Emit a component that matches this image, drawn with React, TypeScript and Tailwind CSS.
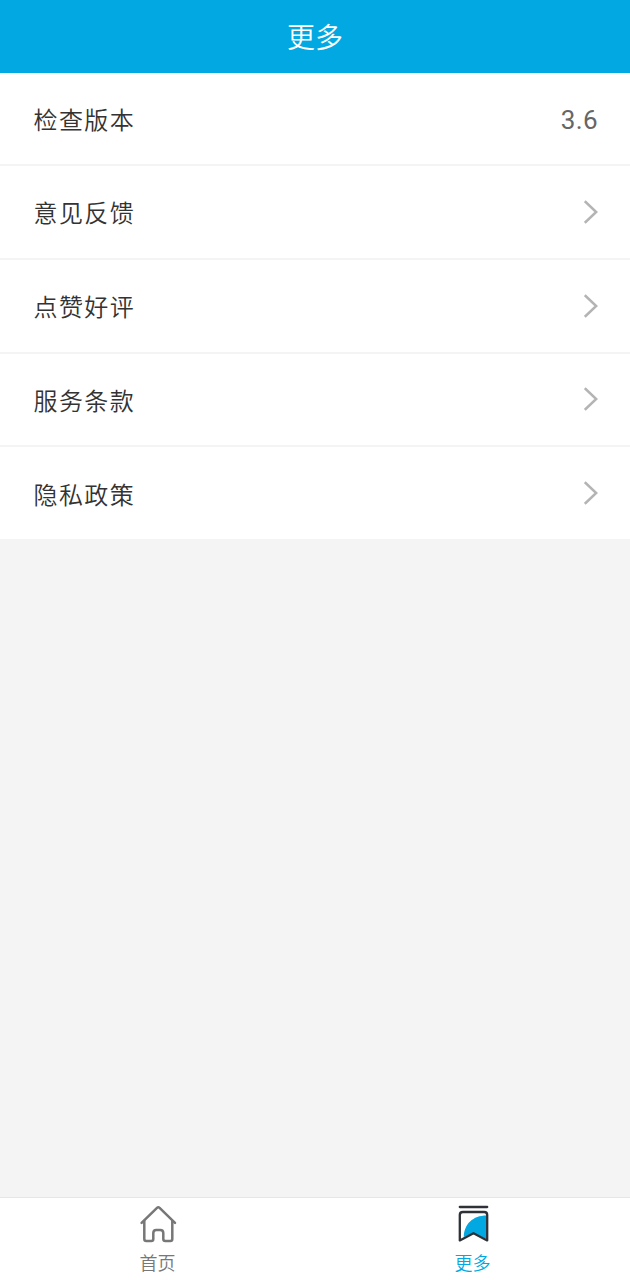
import React from "react";

interface MenuRowProps {
  title: string;
  value?: string;
}

const ChevronIcon: React.FC = () => {
  return (
    <svg className="h-6 w-[14px]" viewBox="0 0 14 24" fill="none">
      <path d="M0.8 1.2 12.2 12 0.8 22.8" stroke="#b4b4b4" strokeWidth="2.5" />
    </svg>
  );
};

const HomeIcon: React.FC = () => {
  return (
    <svg
      className="h-10 w-10"
      viewBox="0 0 40 40"
      fill="none"
      stroke="#777777"
      strokeWidth="2.5"
      strokeLinecap="round"
      strokeLinejoin="round"
    >
      <path d="M3.6 18.8 19 3.8Q20.3 2.6 21.6 3.8L37 18.8" />
      <path d="M6.3 17V35Q6.3 37 8.3 37H13.3Q15.3 37 15.3 35V29Q15.3 26 18.3 26H22.3Q25.3 26 25.3 29V35Q25.3 37 27.3 37H32.3Q34.3 37 34.3 35V17" />
    </svg>
  );
};

const MoreIcon: React.FC = () => {
  return (
    <svg className="h-10 w-10" viewBox="0 0 40 40" fill="none">
      <path d="M10.8 33C11 20 20 11.5 33.5 11.5V35L20.5 29Z" fill="#02a8e2" />
      <g
        stroke="#2e3238"
        strokeWidth="2.3"
        strokeLinecap="round"
        strokeLinejoin="round"
      >
        <path d="M6.8 3H34.2" />
        <path d="M6.8 11Q6.8 8 9.8 8H31.2Q34.2 8 34.2 11V36.4L20.5 29.2 6.8 36.4Z" />
      </g>
    </svg>
  );
};

const MenuRow: React.FC<MenuRowProps> = ({ title, value }) => {
  return (
    <li className="flex h-[93.7px] items-center justify-between border-b-2 border-[#f4f4f4] pr-8 pl-[33.5px] last:h-[92.2px] last:border-b-0">
      <span className="pt-[0.5px] text-2xl font-[350] tracking-[1.4px] text-[#333333]">
        {title}
      </span>
      {value ? (
        <span className="pt-[5px] font-[Roboto] text-[26px] tracking-[0.4px] text-[#666666]">
          {value}
        </span>
      ) : (
        <ChevronIcon />
      )}
    </li>
  );
};

const rows: MenuRowProps[] = [
  { title: "检查版本", value: "3.6" },
  { title: "意见反馈" },
  { title: "点赞好评" },
  { title: "服务条款" },
  { title: "隐私政策" },
];

const App: React.FC = () => {
  return (
    <div className="flex h-screen flex-col bg-[#f4f4f4] font-['Noto_Sans_CJK_SC',sans-serif]">
      {/* Title bar */}
      <header className="flex h-[72.5px] shrink-0 items-center justify-center bg-[#02a8e2]">
        <h1 className="text-[28px] font-[350] text-white">更多</h1>
      </header>

      {/* Settings list */}
      <main className="grow">
        <ul className="bg-white">
          {rows.map((row) => (
            <MenuRow key={row.title} title={row.title} value={row.value} />
          ))}
        </ul>
      </main>

      {/* Bottom tabs */}
      <nav className="grid h-[83px] shrink-0 grid-cols-2 border-t border-[#e6e6e6] bg-white">
        <a className="flex flex-col items-center pt-[6px] text-lg leading-[36px] font-[350] text-[#777777]">
          <HomeIcon />
          首页
        </a>
        <a className="flex flex-col items-center pt-[6px] text-lg leading-[36px] font-[350] text-[#02a8e2]">
          <MoreIcon />
          更多
        </a>
      </nav>
    </div>
  );
};

export default App;
